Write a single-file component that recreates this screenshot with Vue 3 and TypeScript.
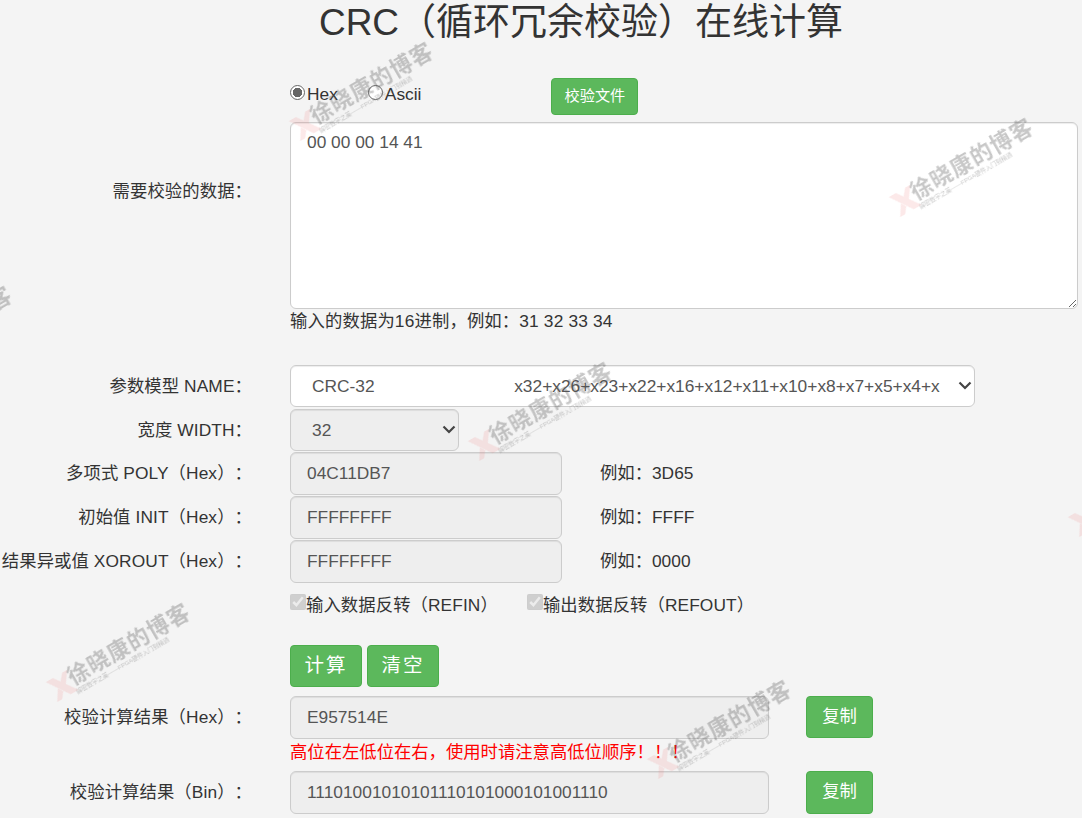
<script setup lang="ts">
const crcOption = 'CRC-32' + '\u00a0'.repeat(29) + 'x32+x26+x23+x22+x16+x12+x11+x10+x8+x7+x5+x4+x2+x+1'
const params = [
  { label: '多项式 POLY（Hex）：', value: '04C11DB7', example: '例如：3D65' },
  { label: '初始值 INIT（Hex）：', value: 'FFFFFFFF', example: '例如：FFFF' },
  { label: '结果异或值 XOROUT（Hex）：', value: 'FFFFFFFF', example: '例如：0000' },
]
const marks = [
  { x: 300, y: 147 },
  { x: 900, y: 223 },
  { x: -121, y: 391 },
  { x: 479, y: 467 },
  { x: 1079, y: 543 },
  { x: 57, y: 708 },
  { x: 658, y: 785 },
]
</script>

<template>
  <div class="page">
    <h1 class="title">CRC（循环冗余校验）在线计算</h1>

    <div class="row mode-row">
      <span></span>
      <div class="modes">
        <label class="mode"><input type="radio" name="mode" checked />Hex</label>
        <label class="mode"><input type="radio" name="mode" />Ascii</label>
        <button class="btn btn-file" type="button">校验文件</button>
      </div>
    </div>

    <div class="row data-row">
      <label class="label">需要校验的数据：</label>
      <div>
        <textarea class="control data" spellcheck="false">00 00 00 14 41</textarea>
        <div class="hint">输入的数据为16进制，例如：31 32 33 34</div>
      </div>
    </div>

    <div class="params">
      <div class="row">
        <label class="label">参数模型 NAME：</label>
        <div class="select-wrap model-wrap">
          <select class="control select model"><option>{{ crcOption }}</option></select>
          <svg class="chevron" viewBox="0 0 14 9" width="14" height="9">
            <path d="M1.5 1.5 7 7l5.500-5.500" fill="none" stroke="#444" stroke-width="2.200" />
          </svg>
        </div>
      </div>
      <div class="row">
        <label class="label">宽度 WIDTH：</label>
        <div class="select-wrap width-wrap">
          <select class="control select width" disabled><option>32</option></select>
          <svg class="chevron" viewBox="0 0 14 9" width="14" height="9">
            <path d="M1.5 1.5 7 7l5.500-5.500" fill="none" stroke="#444" stroke-width="2.200" />
          </svg>
        </div>
      </div>
      <div v-for="p in params" :key="p.label" class="row">
        <label class="label">{{ p.label }}</label>
        <div class="with-example">
          <input class="control input short" :value="p.value" readonly />
          <span class="example">{{ p.example }}</span>
        </div>
      </div>
    </div>

    <div class="row check-row">
      <span></span>
      <div class="checks">
        <label class="check"><input type="checkbox" checked disabled />输入数据反转（REFIN）</label>
        <label class="check"><input type="checkbox" checked disabled />输出数据反转（REFOUT）</label>
      </div>
    </div>

    <div class="row action-row">
      <span></span>
      <div class="actions">
        <button class="btn btn-action" type="button">计算</button>
        <button class="btn btn-action" type="button">清空</button>
      </div>
    </div>

    <div class="row result-row">
      <label class="label">校验计算结果（Hex）：</label>
      <div class="result">
        <input class="control input long" value="E957514E" readonly />
        <button class="btn btn-copy" type="button">复制</button>
      </div>
    </div>
    <div class="row">
      <span></span>
      <div class="warning">高位在左低位在右，使用时请注意高低位顺序！！！</div>
    </div>
    <div class="row result-row bin-row">
      <label class="label">校验计算结果（Bin）：</label>
      <div class="result">
        <input class="control input long" value="11101001010101110101000101001110" readonly />
        <button class="btn btn-copy" type="button">复制</button>
      </div>
    </div>

    <div
      v-for="m in marks"
      :key="m.x"
      class="mark"
      :style="{ left: m.x + 'px', top: m.y + 'px' }"
    >
      <svg class="mark-logo" viewBox="0 0 30 28" width="25" height="23">
        <polygon points="0,0 10,0 30,28 19,28" fill="#e77" />
        <polygon points="30,0 23,0 14,11 18,17" fill="#e77" />
        <polygon points="0,28 7,28 13,20 9,14" fill="#e77" />
      </svg>
      <div class="mark-text">
        <div class="mark-name">徐晓康的博客</div>
        <div class="mark-sub">解密数字之美——FPGA硬件入门到精通</div>
      </div>
    </div>
  </div>
</template>

<style>
html,
body {
  margin: 0;
  background: #f4f4f4;
}
</style>

<style scoped>
.page {
  position: relative;
  height: 818px;
  overflow: hidden;
  background: #f4f4f4;
  color: #333;
  font-family: "Liberation Sans", "Noto Sans CJK SC", sans-serif;
  font-size: 17.33px;
  text-spacing-trim: space-all;
}
.title {
  margin: 0 0 0 80px;
  height: 76px;
  padding-top: 2px;
  font-size: 37px;
  font-weight: 400;
  line-height: 42px;
  text-align: center;
}
.row {
  display: grid;
  grid-template-columns: 252px 1fr;
  column-gap: 38px;
}
.label {
  box-sizing: border-box;
  white-space: nowrap;
  display: flex;
  align-items: center;
  justify-content: flex-end;
  padding-bottom: 5px;
  letter-spacing: 0.1px;
}
.mode-row {
  height: 44px;
}
.modes {
  display: flex;
  align-items: flex-start;
}
.mode {
  display: flex;
  align-items: center;
  height: 32px;
  margin-right: 30px;
}
.mode input {
  appearance: none;
  box-sizing: border-box;
  width: 15px;
  height: 15px;
  margin: -3px 2px 0 0;
  border: 1px solid #666;
  border-radius: 50%;
  background: #fff;
}
.mode input:checked {
  background: radial-gradient(circle, #666 0 4.6px, #fff 5px);
}
.btn {
  box-sizing: border-box;
  border: 1px solid #4cae4c;
  border-radius: 4px;
  background: #5cb85c;
  color: #fff;
  font-family: inherit;
  padding: 0 0 6px;
}
.btn-file {
  width: 87px;
  height: 37px;
  margin-left: 100px;
  font-size: 15.17px;
}
.control {
  box-sizing: border-box;
  display: block;
  border: 1px solid #ccc;
  border-radius: 6px;
  color: #555;
  font-family: inherit;
  font-size: 17.33px;
  outline: none;
  box-shadow: inset 0 1px 1px rgba(0, 0, 0, 0.075);
}
.data {
  width: 788px;
  height: 187px;
  padding: 7px 16px;
  background: #fff;
  resize: both;
  line-height: 24px;
}
.data-row .label {
  height: 140px;
}
.hint {
  height: 24px;
  line-height: 24px;
  letter-spacing: 0.15px;
}
.params {
  margin-top: 32px;
}
.select-wrap {
  position: relative;
}
.model-wrap {
  width: 685px;
  margin-bottom: 2px;
}
.width-wrap {
  width: 169px;
  margin-bottom: 1px;
}
.select {
  width: 100%;
  height: 42px;
  padding: 0 34px 0 21px;
  appearance: none;
  opacity: 1;
}
.model {
  background: #fff;
}
.width {
  background: #eee;
}
.chevron {
  position: absolute;
  right: 3px;
  top: 16px;
  pointer-events: none;
}
.input {
  height: 43px;
  padding: 0 16px;
  background: #eee;
}
.short {
  width: 272px;
}
.long {
  width: 479px;
}
.with-example {
  display: flex;
  align-items: center;
  gap: 38px;
  margin-bottom: 1px;
}
.example {
  padding-bottom: 4px;
}
.check-row {
  height: 61px;
}
.checks {
  display: flex;
  align-items: flex-start;
  gap: 29px;
  padding-top: 8px;
}
.check {
  display: flex;
  align-items: center;
  height: 22px;
  letter-spacing: 0.1px;
}
.check input {
  width: 16px;
  height: 16px;
  margin: -2px 0 0 0;
  flex: none;
}
.actions {
  display: flex;
  gap: 5px;
}
.btn-action {
  width: 72px;
  height: 42px;
  font-size: 19.500px;
  letter-spacing: 2px;
}
.action-row {
  height: 51px;
}
.result {
  display: flex;
  gap: 37px;
}
.btn-copy {
  width: 67px;
  height: 42px;
  font-size: 17.33px;
}
.bin-row .btn-copy {
  height: 43px;
}
.warning {
  height: 32px;
  padding-top: 1px;
  box-sizing: border-box;
  line-height: 24px;
  color: #f00;
}
.mark {
  position: absolute;
  display: flex;
  align-items: flex-end;
  gap: 0;
  transform: translateY(-100%) rotate(-30deg);
  transform-origin: 0 100%;
  pointer-events: none;
  opacity: 0.32;
  filter: blur(0.5px);
  white-space: nowrap;
}
.mark-logo {
  flex: none;
  opacity: 0.5;
  transform: translate(3px, -5px);
}
.mark-text {
  display: flex;
  flex-direction: column;
  color: #555;
}
.mark-name {
  font-size: 22px;
  font-weight: 700;
  line-height: 23px;
  letter-spacing: 1px;
}
.mark-sub {
  font-size: 6px;
  line-height: 8px;
}
</style>
